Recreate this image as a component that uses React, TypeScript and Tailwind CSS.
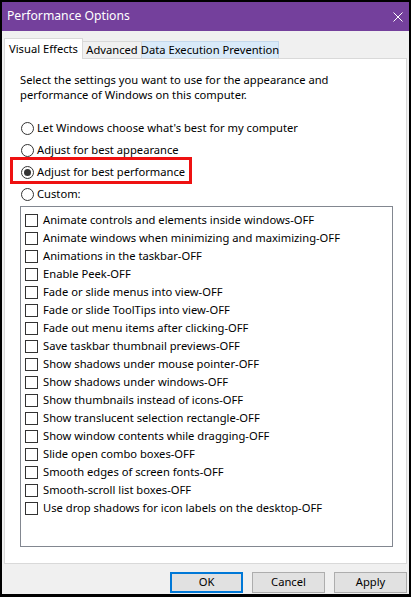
import React from "react";

const items = [
  "Animate controls and elements inside windows-OFF",
  "Animate windows when minimizing and maximizing-OFF",
  "Animations in the taskbar-OFF",
  "Enable Peek-OFF",
  "Fade or slide menus into view-OFF",
  "Fade or slide ToolTips into view-OFF",
  "Fade out menu items after clicking-OFF",
  "Save taskbar thumbnail previews-OFF",
  "Show shadows under mouse pointer-OFF",
  "Show shadows under windows-OFF",
  "Show thumbnails instead of icons-OFF",
  "Show translucent selection rectangle-OFF",
  "Show window contents while dragging-OFF",
  "Slide open combo boxes-OFF",
  "Smooth edges of screen fonts-OFF",
  "Smooth-scroll list boxes-OFF",
  "Use drop shadows for icon labels on the desktop-OFF",
];

function Radio({ checked }: { checked?: boolean }) {
  return (
    <span className="w-[13px] h-[13px] rounded-full border border-[#333333] bg-white flex items-center justify-center shrink-0">
      {checked && <span className="w-[7px] h-[7px] rounded-full bg-[#333333]" />}
    </span>
  );
}

function RadioRow({ label, checked, boxed }: { label: string; checked?: boolean; boxed?: boolean }) {
  return (
    <div className="relative flex items-center h-[22px] pl-[16px] gap-[3px] whitespace-nowrap">
      <Radio checked={checked} />
      <span>{label}</span>
      {boxed && (
        <div className="absolute left-[5px] top-[-4px] w-[182px] h-[27px] border-[3px] border-[#ee1111]" />
      )}
    </div>
  );
}

export default function App() {
  return (
    <div
      className="w-[411px] h-[597px] bg-black pt-[2px] pl-[2px] pr-[2px] pb-[3px] text-[11.2px] text-black"
      style={{ fontFamily: '"Noto Sans", "Open Sans", sans-serif' }}
    >
      <div className="w-full h-full bg-[#f0f0f0] flex flex-col">
        <div className="h-[29px] bg-[#74409c] flex items-center justify-between pl-[5px] pr-[5px] shrink-0">
          <span className="text-white text-[12.2px]">Performance Options</span>
          <svg width="10" height="10" viewBox="0 0 10 10" className="mr-[1px]">
            <path d="M0.5 0.5 L9.5 9.5 M9.5 0.5 L0.5 9.5" stroke="white" strokeWidth="1" />
          </svg>
        </div>
        <div className="pl-[2px] pr-[2px] pt-[7px] flex flex-col">
          <div className="flex items-end h-[20px] relative z-10 whitespace-nowrap">
            <div className="h-[21px] w-[79px] bg-white border-l border-t border-r border-[#d9d9d9] flex items-center justify-center mb-[-1px]">
              Visual Effects
            </div>
            <div className="h-[17px] w-[59px] bg-[#f0f0f0] border-t border-r border-[#d9d9d9] flex items-center justify-center">
              Advanced
            </div>
            <div className="h-[17px] w-[137px] bg-[#d9eaf9] border-t border-r border-[#c4d8ec] flex items-center justify-center">
              Data Execution Prevention
            </div>
          </div>
          <div className="h-[506px] bg-white border border-[#d9d9d9] flex flex-col pl-[15px] pr-[13px]">
            <div className="pt-[13px] leading-[15px]">
              Select the settings you want to use for the appearance and
              <br />
              performance of Windows on this computer.
            </div>
            <div className="mt-[15px] flex flex-col ml-[-15px]">
              <RadioRow label="Let Windows choose what's best for my computer" />
              <RadioRow label="Adjust for best appearance" />
              <RadioRow label="Adjust for best performance" checked boxed />
              <RadioRow label="Custom:" />
            </div>
            <div className="mt-[1px] h-[341px] border border-[#828790] pt-[4px] flex flex-col whitespace-nowrap">
              {items.map((t) => (
                <div key={t} className="flex items-center h-[18px] pl-[4px] gap-[5px]">
                  <span className="w-[13px] h-[13px] border border-[#333333] bg-white shrink-0" />
                  <span>{t}</span>
                </div>
              ))}
            </div>
          </div>
        </div>
        <div className="flex justify-end gap-[9px] pr-[2px] mt-[8px]">
          <button className="w-[73px] h-[21px] bg-[#e1e1e1] border-2 border-[#0078d7] flex items-center justify-center">
            OK
          </button>
          <button className="w-[73px] h-[21px] bg-[#e1e1e1] border border-[#adadad] flex items-center justify-center">
            Cancel
          </button>
          <button className="w-[73px] h-[21px] bg-[#e1e1e1] border border-[#adadad] flex items-center justify-center">
            Apply
          </button>
        </div>
      </div>
    </div>
  );
}
